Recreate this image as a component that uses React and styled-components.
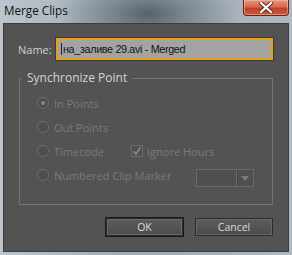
import React from 'react';
import styled, { createGlobalStyle } from 'styled-components';

const GlobalStyle = createGlobalStyle`
  html, body {
    margin: 0;
    padding: 0;
    background: #a9b3bc;
  }
  * {
    box-sizing: border-box;
  }
`;

const Window = styled.div`
  width: 292px;
  height: 255px;
  display: flex;
  flex-direction: column;
  background:
    radial-gradient(ellipse 90px 40px at 148px 14px, #56636f 0%, #7d8995 45%, rgba(168, 178, 188, 0) 100%),
    linear-gradient(90deg, #bcc5cd 0%, #a3adb7 40%, #a3adb7 60%, #b0b8c0 100%);
  font-family: 'Open Sans', 'Noto Sans', sans-serif;
`;

const TitleBar = styled.div`
  height: 23px;
  flex: none;
  display: flex;
  align-items: flex-start;
  justify-content: space-between;
  padding-left: 4px;
  padding-right: 3px;
`;

const Title = styled.div`
  font-size: 11.7px;
  line-height: 21px;
  color: #111;
`;

const CloseButton = styled.div`
  width: 46px;
  height: 16px;
  display: flex;
  align-items: center;
  justify-content: center;
  border: 1px solid #6a2418;
  border-top: none;
  border-radius: 0 0 4px 4px;
  background: linear-gradient(180deg, #e4937c 0%, #d46b52 45%, #c0412a 55%, #c85a3e 100%);
  box-shadow: inset 0 0 0 1px rgba(255, 210, 190, 0.45);
`;

const Body = styled.div`
  flex: 1;
  margin: 0 3px 3px 3px;
  background: #535353;
  border: 1px solid #3d3d3d;
  padding: 14px 15px 0 14px;
  display: flex;
  flex-direction: column;
`;

const NameRow = styled.div`
  display: flex;
  align-items: center;
  height: 22px;
`;

const FieldLabel = styled.label`
  width: 38px;
  flex: none;
  font-size: 11px;
  color: #cfcfcf;
`;

const TextInput = styled.div`
  flex: 1;
  height: 22px;
  border: 2px solid #e8a010;
  box-shadow: 0 0 0 1px #3a3a3a;
  background: #a3a3a3;
  color: #141414;
  font-family: 'Liberation Sans', Arial, sans-serif;
  font-size: 10.8px;
  letter-spacing: -0.35px;
  line-height: 18px;
  padding-left: 3px;
  display: flex;
  align-items: center;
`;

const Caret = styled.span`
  display: inline-block;
  width: 1px;
  height: 12px;
  background: #222;
  margin-right: 1px;
`;

const Group = styled.fieldset`
  margin: 11px 0 0 1px;
  padding: 0 16px 17px 2px;
  border: 1px solid #727272;
  min-width: 0;
`;

const Legend = styled.legend`
  padding: 0 5px;
  font-size: 12px;
  line-height: 14px;
  color: #d4d4d4;
`;

const Options = styled.div`
  padding: 6px 0 0 15px;
  display: flex;
  flex-direction: column;
`;

const OptionRow = styled.div`
  height: 24px;
  display: flex;
  align-items: center;
`;

const RadioItem = styled.div`
  width: ${p => p.$width}px;
  flex: none;
  display: flex;
  align-items: center;
  gap: 5px;
  font-size: 11px;
  color: #7a7a7a;
`;

const Radio = styled.span`
  width: 12px;
  height: 12px;
  flex: none;
  border-radius: 50%;
  border: 1px solid #6c6c6c;
  background: #4e4e4e;
  display: flex;
  align-items: center;
  justify-content: center;

  &::after {
    content: '';
    width: 4px;
    height: 4px;
    border-radius: 50%;
    background: ${p => (p.$checked ? '#858585' : 'transparent')};
  }
`;

const CheckItem = styled.div`
  display: flex;
  align-items: center;
  gap: 4px;
  font-size: 11px;
  color: #7a7a7a;
`;

const CheckBox = styled.span`
  width: 12px;
  height: 12px;
  flex: none;
  border: 1px solid #6c6c6c;
  background: #4e4e4e;
  display: flex;
  align-items: center;
  justify-content: center;
`;

const Dropdown = styled.div`
  width: 58px;
  height: 18px;
  margin-top: 6px;
  border: 1px solid #6a6a6a;
  background: #4f4f4f;
  display: flex;
  justify-content: flex-end;
`;

const DropArrow = styled.div`
  width: 17px;
  border-left: 1px solid #6a6a6a;
  box-shadow: inset 1px 0 0 #444;
  display: flex;
  align-items: center;
  justify-content: center;
`;

const ButtonRow = styled.div`
  display: flex;
  justify-content: flex-end;
  align-items: center;
  gap: 11px;
  margin-top: 12px;
`;

const Button = styled.div`
  width: ${p => (p.$default ? 79 : 78)}px;
  height: ${p => (p.$default ? 20 : 18)}px;
  border: 1px solid ${p => (p.$default ? '#1c1c1c' : '#2c2c2c')};
  box-shadow: ${p => (p.$default ? 'inset 0 0 0 1px #2a2a2a, inset 0 0 0 2px #6a6a6a' : 'inset 0 0 0 1px #666')};
  background: linear-gradient(180deg, #5e5e5e 0%, #545454 50%, #4b4b4b 100%);
  color: #dcdcdc;
  font-size: 10.5px;
  display: flex;
  align-items: center;
  justify-content: center;
`;

const App = () => (
  <>
    <GlobalStyle />
    <Window>
      <TitleBar>
        <Title>Merge Clips</Title>
        <CloseButton>
          <svg width="14" height="11" viewBox="0 0 14 11">
            <path d="M2 1 L12 10 M12 1 L2 10" stroke="#5a2a20" strokeWidth="4" strokeLinecap="square" />
            <path d="M2 1 L12 10 M12 1 L2 10" stroke="#ffffff" strokeWidth="2.2" strokeLinecap="square" />
          </svg>
        </CloseButton>
      </TitleBar>
      <Body>
        <NameRow>
          <FieldLabel>Name:</FieldLabel>
          <TextInput>
            <Caret />
            на_заливе 29.avi - Merged
          </TextInput>
        </NameRow>
        <Group>
          <Legend>Synchronize Point</Legend>
          <Options>
            <OptionRow>
              <RadioItem $width={94}>
                <Radio $checked />
                In Points
              </RadioItem>
            </OptionRow>
            <OptionRow>
              <RadioItem $width={94}>
                <Radio />
                Out Points
              </RadioItem>
            </OptionRow>
            <OptionRow>
              <RadioItem $width={94}>
                <Radio />
                Timecode
              </RadioItem>
              <CheckItem>
                <CheckBox>
                  <svg width="10" height="10" viewBox="0 0 10 10">
                    <path d="M1.5 5.5 L4 8 L8.5 1.5" fill="none" stroke="#858585" strokeWidth="1.8" />
                  </svg>
                </CheckBox>
                Ignore Hours
              </CheckItem>
            </OptionRow>
            <OptionRow>
              <RadioItem $width={159}>
                <Radio />
                Numbered Clip Marker
              </RadioItem>
              <Dropdown>
                <DropArrow>
                  <svg width="8" height="5" viewBox="0 0 8 5">
                    <path d="M0 0 L8 0 L4 5 Z" fill="#7c7c7c" />
                  </svg>
                </DropArrow>
              </Dropdown>
            </OptionRow>
          </Options>
        </Group>
        <ButtonRow>
          <Button $default>OK</Button>
          <Button>Cancel</Button>
        </ButtonRow>
      </Body>
    </Window>
  </>
);

export default App;
